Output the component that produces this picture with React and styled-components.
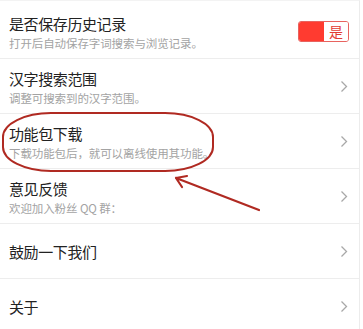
import styled, { createGlobalStyle } from "styled-components"

const Global = createGlobalStyle`
  html, body {
    margin: 0;
    padding: 0;
    background: #fff;
  }
  body {
    font-family: "Noto Sans CJK SC", "Noto Sans", sans-serif;
  }
`

const Page = styled.div`
  position: relative;
  width: 363px;
  height: 329px;
  overflow: hidden;
  background: #fff;
`

const List = styled.div`
  width: 360px;
  padding-top: 3px;
  border-top: 1px solid #f3f3f3;
  border-right: 1px solid #ececec;
  box-sizing: border-box;
`

const Row = styled.div`
  display: flex;
  align-items: center;
  height: 55px;
  padding: 0 10px 0 9px;
  box-sizing: border-box;
  border-bottom: 1px solid #ededed;
`

const Texts = styled.div`
  flex: 1;
  display: flex;
  flex-direction: column;
  margin-top: 2px;
`

const Title = styled.div`
  font-size: 15px;
  line-height: 22px;
  color: #222;
  letter-spacing: -0.4px;
`

const Sub = styled.div`
  font-size: 11.5px;
  line-height: 16px;
  color: #a3a3a3;
  letter-spacing: -0.1px;
`

const Chevron = styled.svg`
  width: 8px;
  height: 13px;
  flex: none;
  margin-right: 1px;
`

const Toggle = styled.div`
  display: flex;
  width: 51px;
  height: 21px;
  border: 1px solid #e8635f;
  border-radius: 3px;
  overflow: hidden;
  box-sizing: border-box;
`

const ToggleOn = styled.div`
  width: 25px;
  background: #ff3b30;
`

const ToggleLabel = styled.div`
  flex: 1;
  display: flex;
  align-items: center;
  justify-content: center;
  font-size: 14px;
  line-height: 19px;
  color: #e23c34;
  background: #fff;
`

const Overlay = styled.svg`
  position: absolute;
  left: 0;
  top: 0;
  pointer-events: none;
`

const items = [
  { title: "汉字搜索范围", sub: "调整可搜索到的汉字范围。" },
  { title: "功能包下载", sub: "下载功能包后，就可以离线使用其功能。" },
  { title: "意见反馈", sub: "欢迎加入粉丝 QQ 群：" },
  { title: "鼓励一下我们" },
  { title: "关于" },
]

function Arrow() {
  return (
    <Chevron viewBox="0 0 8 13">
      <path d="M1.5 1.5 L6.5 6.5 L1.5 11.5" fill="none" stroke="#a8a8a8" strokeWidth="1.3" />
    </Chevron>
  )
}

export default function App() {
  return (
    <Page>
      <Global />
      <List>
        <Row>
          <Texts>
            <Title>是否保存历史记录</Title>
            <Sub>打开后自动保存字词搜索与浏览记录。</Sub>
          </Texts>
          <Toggle>
            <ToggleOn />
            <ToggleLabel>是</ToggleLabel>
          </Toggle>
        </Row>
        {items.map(it => (
          <Row key={it.title}>
            <Texts>
              <Title>{it.title}</Title>
              {it.sub && <Sub>{it.sub}</Sub>}
            </Texts>
            <Arrow />
          </Row>
        ))}
      </List>
      <Overlay width="363" height="329" viewBox="0 0 363 329">
        <rect x="3" y="113" width="210" height="58" rx="48" ry="24" fill="none" stroke="#b02a22" strokeWidth="2" />
        <path d="M259 210 L176 178 M176 178 L187 176 M176 178 L182 187" fill="none" stroke="#b02a22" strokeWidth="2.2" strokeLinecap="round" />
      </Overlay>
    </Page>
  )
}
